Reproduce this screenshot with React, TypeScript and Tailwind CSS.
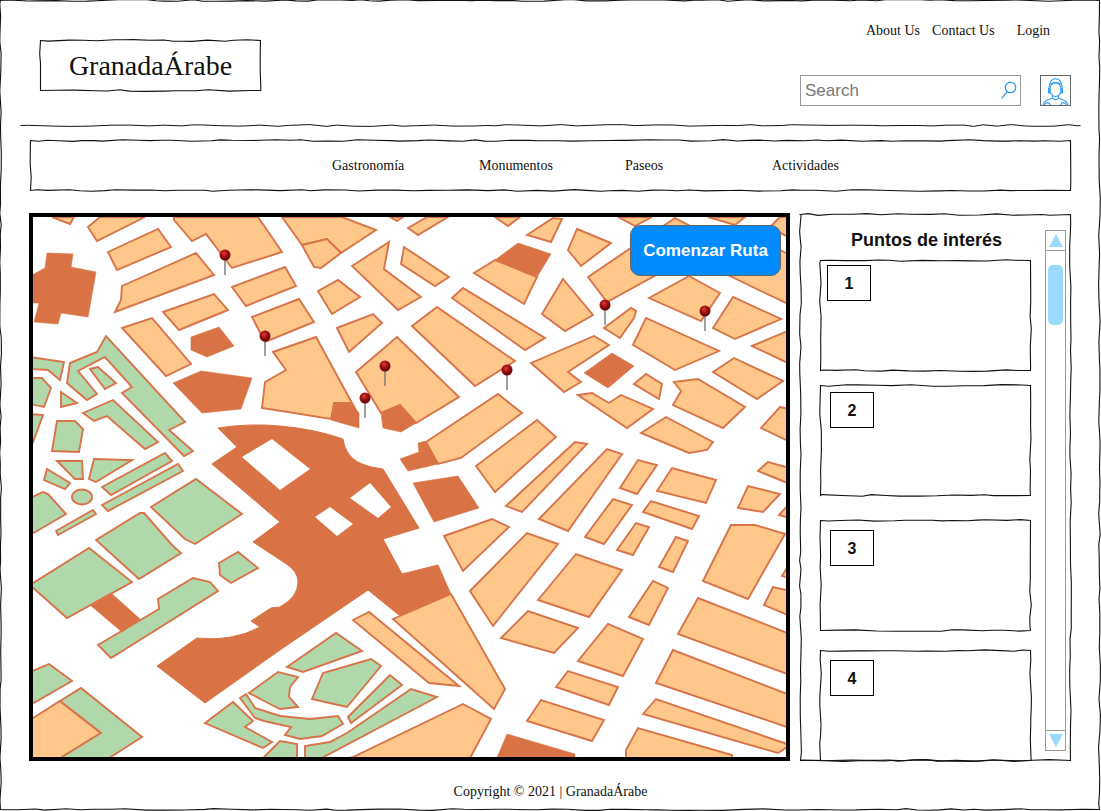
import type { ReactNode } from "react";

// hand drawn outline, seeded so it stays the same between renders
function wobble(w: number, h: number, seed: number, closed = true) {
  let s = seed;
  const rnd = () => {
    s = (s * 16807) % 2147483647;
    return s / 2147483647;
  };
  const amp = () => (rnd() - 0.5) * 1.8;
  const pts: string[] = [];
  const edge = (x0: number, y0: number, x1: number, y1: number) => {
    const len = Math.hypot(x1 - x0, y1 - y0);
    let d = 0;
    while (d < len) {
      const t = d / len;
      const horizontal = y0 === y1;
      const off = d === 0 ? 0 : amp();
      pts.push(
        `${(x0 + (x1 - x0) * t + (horizontal ? 0 : off)).toFixed(1)} ${(y0 + (y1 - y0) * t + (horizontal ? off : 0)).toFixed(1)}`
      );
      d += 8 + rnd() * 14;
    }
  };
  if (!closed) {
    edge(0.5, 0.5, w - 0.5, 0.5);
    pts.push(`${w - 0.5} 0.5`);
    return "M" + pts.join("L");
  }
  edge(0.5, 0.5, w - 0.5, 0.5);
  edge(w - 0.5, 0.5, w - 0.5, h - 0.5);
  edge(w - 0.5, h - 0.5, 0.5, h - 0.5);
  edge(0.5, h - 0.5, 0.5, 0.5);
  return "M" + pts.join("L") + "Z";
}

function Sketch({ w, h, seed }: { w: number; h: number; seed: number }) {
  return (
    <svg
      className="pointer-events-none absolute left-0 top-0 overflow-visible"
      width={w}
      height={h}
      fill="none"
    >
      <path d={wobble(w, h, seed)} stroke="#111" strokeWidth="1.1" />
    </svg>
  );
}

const orange = [
  "52,217 70,224 74,217",
  "100,217 88,227 97,241 145,217",
  "108,252 158,229 171,247 117,270",
  "174,220 192,241 206,234 232,268 282,252 258,217 174,217",
  "122,286 196,253 214,275 115,312 121,300",
  "163,312 214,294 228,310 179,330",
  "122,328 152,318 191,364 166,376",
  "232,287 285,267 296,286 246,306",
  "252,317 299,299 314,322 265,342",
  "273,352 316,337 358,414 352,403 334,403 331,419 262,408 265,382 286,370",
  "352,266 389,242 384,269 421,297 398,310",
  "404,247 449,277 435,286 401,264",
  "318,291 338,280 360,297 332,314",
  "337,328 373,314 382,323 349,352",
  "356,372 397,337 459,397 416,423 400,405 381,413",
  "412,326 437,307 515,361 475,386",
  "452,298 463,288 545,338 525,350",
  "390,217 397,221 403,217",
  "495,217 508,226 520,217",
  "408,228 418,235 448,217 427,217",
  "282,217 302,245 327,239 341,253 376,230 342,217",
  "302,245 314,267 321,268 341,253 327,239",
  "527,235 553,218 562,219 551,242",
  "474,273 495,260 537,277 524,304",
  "577,229 611,243 581,266 568,250",
  "563,279 593,315 565,331 542,314",
  "588,277 675,218 700,231 700,251 607,302",
  "649,298 689,276 720,293 701,321",
  "713,328 733,297 781,319 735,339",
  "604,328 631,308 636,311 634,318 620,338",
  "633,345 646,318 719,351 675,370",
  "752,346 790,330 790,364",
  "713,372 734,358 783,381 757,399",
  "531,363 594,336 609,345 568,372 581,382 564,392",
  "634,384 646,374 662,384 659,399",
  "674,382 698,379 745,407 723,428 673,405 681,391",
  "578,395 592,393 609,403 621,395 653,409 627,428",
  "641,433 666,417 713,442 707,450 689,453",
  "618,217 635,226 652,217",
  "708,217 735,225 745,217",
  "770,227 780,217 790,217 790,238",
  "700,262 732,277 790,305 790,255 760,240",
  "761,428 780,407 790,409 790,442",
  "758,471 768,462 790,468 790,484",
  "738,508 748,486 780,494 763,512",
  "779,515 790,503 790,518",
  "703,581 731,525 755,525 785,534 748,599",
  "782,576 790,563 790,578",
  "764,605 773,587 790,591 790,616",
  "426,442 498,394 522,413 461,458 438,464",
  "476,466 537,420 556,437 495,492",
  "506,506 575,442 587,444 522,512",
  "539,519 607,449 622,454 568,531",
  "620,488 638,460 657,465 637,494",
  "657,491 672,468 716,480 706,503",
  "585,537 613,499 632,505 604,544",
  "643,512 651,501 699,516 692,529",
  "617,550 636,523 649,527 633,555",
  "659,567 676,537 688,541 673,572",
  "444,536 492,519 509,527 463,571",
  "470,591 527,533 558,544 493,626",
  "538,600 576,554 622,570 589,617",
  "629,617 653,581 668,588 649,625",
  "678,634 698,598 790,634 790,675",
  "656,683 673,650 790,695 790,728",
  "643,714 656,699 790,745 778,753",
  "626,750 638,728 732,755 732,762 626,762",
  "578,661 608,624 643,639 623,676",
  "501,638 528,611 578,628 554,653",
  "556,687 568,671 618,687 609,705",
  "527,721 541,700 604,720 592,741",
  "393,619 451,594 505,689 494,709",
  "353,620 369,612 459,686 429,683",
  "353,757 463,704 491,719 469,760 340,760",
  "33,718 60,701 101,733 62,757 62,760 30,760 30,720",
];

const green = [
  "60,701 81,688 142,737 106,760 62,760 62,757 101,733",
  "30,672 49,664 72,681 30,705",
  "98,645 159,609 158,599 193,578 210,582 218,591 111,658",
  "30,585 89,548 132,582 67,618",
  "96,540 140,513 144,513 172,545 181,553 139,579",
  "151,507 196,479 242,514 195,544 185,539",
  "219,563 238,552 258,568 231,583 220,575",
  "102,487 165,453 172,461 111,495",
  "102,505 178,464 183,471 108,511",
  "56,531 93,510 96,514 58,535",
  "30,498 43,492 48,494 66,514 30,535",
  "44,480 47,469 70,483 65,489",
  "57,461 82,461 83,479 75,479",
  "94,459 132,460 96,482 89,479",
  "57,421 75,421 83,429 79,452 52,451",
  "30,414 43,415 30,450",
  "83,413 113,400 158,442 145,449 107,416 94,421",
  "70,363 67,383 87,400 97,394 78,371 105,357 132,387 122,393 184,456 193,451 169,430 185,422 106,336 97,352",
  "90,369 98,367 116,383 105,389",
  "30,357 64,362 60,380 48,370 30,369",
  "30,378 42,378 51,388 44,407 30,404",
  "61,392 77,403 61,407",
  "287,667 336,633 362,651 303,672",
  "312,699 323,673 371,659 381,666 347,707",
  "348,717 390,675 402,685 351,723",
  "305,760 305,746 330,742 347,733 411,689 437,697 318,760",
  "205,723 233,702 253,721 245,727 272,742 263,748",
  "240,698 246,694 255,708 280,716 310,719 338,716 343,724 322,736 300,739 285,735 291,727 264,721 255,718",
  "249,693 278,672 298,677 290,687 289,697 298,707 280,709 266,702",
  "261,760 280,741 297,744 297,760",
];

const dark = [
  "47,253 73,254 71,267 96,272 88,317 61,313 58,324 34,322 39,303 30,303 30,276 45,268",
  "191,337 219,327 234,346 207,357 191,350",
  "173,383 201,371 252,378 241,409 202,413",
  "413,483 458,476 479,508 434,522",
  "495,260 518,243 551,254 537,277",
  "584,373 612,353 634,366 608,388",
  "335,403 350,403 359,413 359,428 331,420",
  "381,413 400,405 416,423 401,432 383,428",
  "400,459 419,452 418,443 426,441 438,464 408,471",
  "507,734 575,754 575,760 496,760",
  "90,605 111,593 140,619 122,632",
];

const holes = [
  "242,457 272,439 310,469 280,490",
  "350,498 370,483 391,507 378,518",
  "315,517 330,507 353,524 337,536",
];

const pins = [
  [225, 255],
  [265, 336],
  [385, 366],
  [365, 398],
  [507, 370],
  [605, 305],
  [705, 311],
];

function CityMap() {
  return (
    <svg width="753" height="540" viewBox="33 217 753 540" className="block">
      <defs>
        <radialGradient id="pin" cx="0.42" cy="0.35" r="0.65">
          <stop offset="0" stopColor="#d8403c" />
          <stop offset="0.45" stopColor="#a50f10" />
          <stop offset="1" stopColor="#5c0505" />
        </radialGradient>
      </defs>
      <rect x="33" y="217" width="753" height="540" fill="#fff" />
      {/* plaza and cathedral block */}
      <path
        d="M218 428 Q250 423 280 426 Q315 429 343 439 C345 452 352 460 362 464 Q372 468 383 469 L419 528 L383 539 L402 574 L438 565 L452 597 L399 615 L368 590 L280 650 L205 703 L157 666 L197 638 Q232 642 260 627 L251 621 L271 608 L280 607 Q298 597 298 582 Q298 571 285 563 L253 542 L280 522 L212 464 L237 447 Z"
        fill="#d97346"
        stroke="#d97346"
      />
      {holes.map((p) => (
        <polygon key={p} points={p} fill="#fff" />
      ))}
      {orange.map((p) => (
        <polygon key={p} points={p} fill="#ffc88a" stroke="#d8734a" strokeWidth="1.9" />
      ))}
      {green.map((p) => (
        <polygon key={p} points={p} fill="#b1d8ab" stroke="#d8734a" strokeWidth="1.9" />
      ))}
      <ellipse cx="82" cy="497" rx="10" ry="7.5" fill="#b1d8ab" stroke="#d8734a" strokeWidth="1.9" />
      {dark.map((p) => (
        <polygon key={p} points={p} fill="#d97346" stroke="#d97346" strokeWidth="0.6" />
      ))}
      {pins.map(([x, y]) => (
        <g key={x}>
          <line x1={x} y1={y} x2={x} y2={y + 20} stroke="#777" strokeWidth="1.4" />
          <circle cx={x} cy={y} r="5.5" fill="url(#pin)" />
        </g>
      ))}
    </svg>
  );
}

function SearchIcon() {
  return (
    <svg width="18" height="20" viewBox="0 0 18 20" fill="none" stroke="#2e9bf0" strokeWidth="1.3">
      <circle cx="10.5" cy="6.5" r="5.2" />
      <path d="M7.2 10.7 L1.8 17.4" />
    </svg>
  );
}

function AvatarIcon() {
  return (
    <svg width="29" height="29" viewBox="0 0 29 29" fill="none" stroke="#2e9bf0" strokeWidth="1.1">
      <ellipse cx="14.5" cy="13.5" rx="5.6" ry="7" />
      <path d="M8 16 C7.5 7 10 2.8 14.5 2.8 C19 2.8 21.8 7 21 16" />
      <path d="M9 8.2 C12 6.8 17 6.8 20 8.2" />
      <path d="M7.5 13 H9 V17 H7.5 Z M20 13 H21.5 V17 H20 Z" />
      <path d="M11.5 19.5 V22 C9 23.5 3.5 23.5 2 29" />
      <path d="M17.5 19.5 V22 C20 23.5 25.5 23.5 27 29" />
      <path d="M11.5 22 C13 24.5 16 24.5 17.5 22" />
      <path d="M3.5 29 C5 25.8 8.5 25.8 9.5 29 M19.5 29 C20.5 25.8 24 25.8 25.5 29" />
    </svg>
  );
}

function Triangle({ down }: { down?: boolean }) {
  return (
    <svg width="14" height="13" viewBox="0 0 14 13">
      <polygon points={down ? "0,0 14,0 7,13" : "7,0 14,13 0,13"} fill="#99dcff" />
    </svg>
  );
}

function NumberBox({ children }: { children: ReactNode }) {
  return (
    <div className="flex h-[36px] w-[44px] items-center justify-center border border-black bg-white pt-[2px] text-[16px] font-bold text-[#111]">
      {children}
    </div>
  );
}

const cards = [
  { n: 1, seed: 71, cls: "mt-0 pl-[7px] pt-[5px]" },
  { n: 2, seed: 83, cls: "mt-[14px] pl-[10px] pt-[7px]" },
  { n: 3, seed: 97, cls: "mt-[24px] pl-[10px] pt-[10px]" },
  { n: 4, seed: 113, cls: "mt-[19px] pl-[10px] pt-[10px]" },
];

export default function App() {
  return (
    <div className="relative h-[811px] w-[1101px] overflow-hidden bg-white font-['Liberation_Serif',serif] text-[14px] text-[#111]">
      <Sketch w={1100} h={810} seed={17} />

      {/* Header */}
      <header className="flex h-[125px] justify-between pl-[40px] pr-[30px]">
        <div className="pt-[40px]">
          <div className="relative flex h-[51px] w-[221px] items-center justify-center text-[28px]">
            <Sketch w={221} h={51} seed={29} />
            GranadaÁrabe
          </div>
        </div>
        <div className="flex w-[271px] flex-col">
          <div className="flex h-[75px] items-start pl-[66px] pt-[22px] leading-[17px]">
            <span>About Us</span>
            <span className="ml-[12px]">Contact Us</span>
            <span className="ml-[22px]">Login</span>
          </div>
          <div className="flex justify-between">
            <div className="flex h-[31px] w-[221px] items-center justify-between border border-[#999] pl-[4px] pr-[2px] font-['Liberation_Sans',sans-serif] text-[17px] text-[#777]">
              <span>Search</span>
              <SearchIcon />
            </div>
            <div className="flex h-[31px] w-[31px] items-center justify-center border border-[#666]">
              <AvatarIcon />
            </div>
          </div>
        </div>
      </header>

      {/* Divider */}
      <div className="ml-[20px] h-[1px] w-[1061px]">
        <svg className="block overflow-visible" width="1061" height="1" fill="none">
          <path d={wobble(1061, 1, 41, false)} stroke="#111" />
        </svg>
      </div>

      {/* Nav */}
      <nav className="relative ml-[30px] mt-[14px] flex h-[51px] w-[1041px] items-center pl-[302px]">
        <Sketch w={1041} h={51} seed={53} />
        <span className="w-[147px]">Gastronomía</span>
        <span className="w-[146px]">Monumentos</span>
        <span className="w-[147px]">Paseos</span>
        <span>Actividades</span>
      </nav>

      <main className="ml-[29px] mt-[22px] flex items-start gap-[10px]">
        {/* Map */}
        <div className="relative h-[548px] w-[761px] border-4 border-black">
          <CityMap />
          <button className="absolute left-[597px] top-[8px] h-[51px] w-[151px] rounded-[10px] border border-[#666] bg-[#008cff] font-['Liberation_Sans',sans-serif] text-[17px] font-bold text-white">
            Comenzar Ruta
          </button>
        </div>

        {/* Sidebar */}
        <aside className="relative mt-[1px] flex h-[547px] w-[271px] pl-[20px] font-['Liberation_Sans',sans-serif]">
          <Sketch w={271} h={547} seed={61} />
          <div className="w-[211px]">
            <h2 className="flex h-[46px] items-end justify-center pb-[9px] pl-[2px] text-[18px] font-bold leading-[22px] text-[#111]">
              Puntos de interés
            </h2>
            {cards.map((c) => (
              <div key={c.n} className={`relative h-[111px] w-[211px] ${c.cls}`}>
                <Sketch w={211} h={111} seed={c.seed} />
                <NumberBox>{c.n}</NumberBox>
              </div>
            ))}
          </div>
          <div className="relative ml-[14px] mt-[16px] flex h-[521px] w-[21px] flex-col border border-[#999] bg-white">
            <div className="flex h-[20px] items-center justify-center border-b border-[#999]">
              <Triangle />
            </div>
            <div className="flex-1 px-[2px] pt-[14px]">
              <div className="h-[60px] w-[15px] rounded-[5px] bg-[#99dcff]" />
            </div>
            <div className="flex h-[20px] items-center justify-center border-t border-[#999]">
              <Triangle down />
            </div>
          </div>
        </aside>
      </main>

      <footer className="mt-[22px] text-center leading-[17px]">Copyright © 2021 | GranadaÁrabe</footer>
    </div>
  );
}
